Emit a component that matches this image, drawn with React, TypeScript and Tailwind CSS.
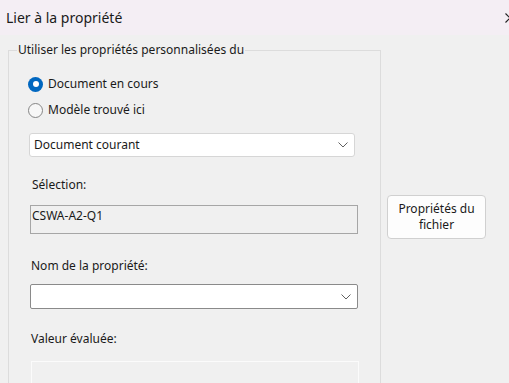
import React from "react";

const font = { fontFamily: '"Noto Sans", "Open Sans", sans-serif' };

const Chevron = () => (
  <svg width="10" height="6" viewBox="0 0 10 6" className="text-[#606060]">
    <path d="M0.5 0.5 L5 5 L9.5 0.5" fill="none" stroke="currentColor" strokeWidth="1" />
  </svg>
);

const Radio = ({ checked, label }: { checked?: boolean; label: string }) => (
  <div className="flex h-[26px] items-center gap-[5px]">
    {checked ? (
      <div className="flex h-[15px] w-[15px] items-center justify-center rounded-full bg-[#0067c0]">
        <div className="h-[6px] w-[6px] rounded-full bg-white" />
      </div>
    ) : (
      <div className="h-[15px] w-[15px] rounded-full border border-[#858585] bg-[#f7f7f7]" />
    )}
    <span>{label}</span>
  </div>
);

export default function App() {
  return (
    <div
      style={font}
      className="flex h-[383px] w-[509px] flex-col overflow-hidden bg-[#f0f0f0] text-[12px] leading-[16px] text-[#1a1a1a]"
    >
      {/* Title bar */}
      <div className="flex h-[35px] shrink-0 items-center justify-between bg-[#f4eef4] pl-[6px] text-[14px]">
        <span>Lier à la propriété</span>
        <svg width="10" height="10" viewBox="0 0 10 10" className="mr-[-6px] text-[#222]">
          <path d="M0.5 0.5 L9.5 9.5 M9.5 0.5 L0.5 9.5" stroke="currentColor" strokeWidth="1.2" />
        </svg>
      </div>

      <div className="flex flex-1">
        {/* Group box */}
        <fieldset className="ml-[8px] mt-[7px] w-[373px] border border-b-0 border-[#dcdcdc] px-0">
          <legend className="ml-[8px] px-px leading-[16px]">Utiliser les propriétés personnalisées du</legend>

          <div className="pl-[19px]">
            <div className="mt-[13px]">
              <Radio checked label="Document en cours" />
              <Radio label="Modèle trouvé ici" />
            </div>

            <div className="ml-px mt-[10px] flex h-[24px] w-[326px] items-center justify-between rounded-[3px] border border-[#d6d6d6] bg-white pl-[4px] pr-[6px]">
              <span>Document courant</span>
              <Chevron />
            </div>

            <div className="ml-[4px] mt-[20px]">Sélection:</div>
            <div className="ml-[2px] mt-[12px] h-[29px] w-[328px] border border-[#a6a6a6] pl-[1px] pt-[2px]">
              CSWA-A2-Q1
            </div>

            <div className="ml-[3px] mt-[24px]">Nom de la propriété:</div>
            <div className="ml-[2px] mt-[10px] flex h-[25px] w-[328px] items-center justify-end rounded-[2px] border border-[#8a8a8a] bg-white pr-[6px]">
              <Chevron />
            </div>

            <div className="ml-[3px] mt-[22px]">Valeur évaluée:</div>
            <div className="ml-[3px] mt-[14px] h-[40px] w-[328px] border border-b-0 border-[#fbfbfb]" />
          </div>
        </fieldset>

        {/* Button */}
        <div className="ml-[6px] mt-[160px]">
          <button className="flex h-[44px] w-[99px] flex-col items-center justify-center rounded-[4px] border border-[#d0d0d0] bg-[#fdfdfd] leading-[16px]">
            <span>Propriétés du</span>
            <span>fichier</span>
          </button>
        </div>
      </div>
    </div>
  );
}
